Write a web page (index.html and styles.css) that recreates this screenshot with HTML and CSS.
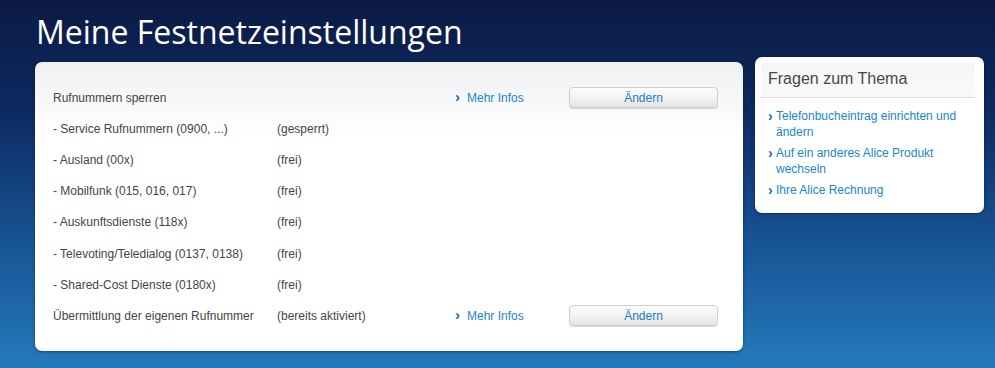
FILE: index.html
```html
<!DOCTYPE html>
<html lang="de">
<head>
  <meta charset="UTF-8">
  <title>Meine Festnetzeinstellungen</title>
  <link rel="stylesheet" href="styles.css">
</head>
<body>
  <h1>Meine Festnetzeinstellungen</h1>
  <div class="layout">
    <div class="main-box">
      <div class="row">
        <span class="label">Rufnummern sperren</span>
        <span class="value"></span>
        <a class="more" href="#"><span class="chev">&rsaquo;</span>Mehr Infos</a>
        <button class="btn">Ändern</button>
      </div>
      <div class="row">
        <span class="label">- Service Rufnummern (0900, ...)</span>
        <span class="value">(gesperrt)</span>
      </div>
      <div class="row">
        <span class="label">- Ausland (00x)</span>
        <span class="value">(frei)</span>
      </div>
      <div class="row">
        <span class="label">- Mobilfunk (015, 016, 017)</span>
        <span class="value">(frei)</span>
      </div>
      <div class="row">
        <span class="label">- Auskunftsdienste (118x)</span>
        <span class="value">(frei)</span>
      </div>
      <div class="row">
        <span class="label">- Televoting/Teledialog (0137, 0138)</span>
        <span class="value">(frei)</span>
      </div>
      <div class="row">
        <span class="label">- Shared-Cost Dienste (0180x)</span>
        <span class="value">(frei)</span>
      </div>
      <div class="row">
        <span class="label">Übermittlung der eigenen Rufnummer</span>
        <span class="value">(bereits aktiviert)</span>
        <a class="more" href="#"><span class="chev">&rsaquo;</span>Mehr Infos</a>
        <button class="btn">Ändern</button>
      </div>
    </div>

    <div class="side-box">
      <h2>Fragen zum Thema</h2>
      <ul class="links">
        <li><a href="#">Telefonbucheintrag einrichten und ändern</a></li>
        <li><a href="#">Auf ein anderes Alice Produkt wechseln</a></li>
        <li><a href="#">Ihre Alice Rechnung</a></li>
      </ul>
    </div>
  </div>
</body>
</html>
```

FILE: styles.css
```css
* { box-sizing: border-box; }
html, body { height: 100%; }
body {
  margin: 0;
  padding: 13px 0 0 36px;
  font-family: "Liberation Sans", Arial, sans-serif;
  font-size: 12px;
  color: #454545;
  background: linear-gradient(to bottom, #0b1a44 0%, #0d2a60 30%, #174f90 62%, #257abb 100%);
  overflow: hidden;
}
h1 {
  margin: 0 0 6px;
  font-family: "Open Sans", sans-serif;
  font-weight: 500;
  font-size: 32px;
  line-height: 38px;
  color: #fff;
  letter-spacing: 0;
}
.layout {
  display: flex;
  align-items: flex-start;
  gap: 12px;
  margin-left: -1px;
}
.main-box {
  width: 708px;
  padding: 20px 18px 19px;
  margin-top: 5px;
  border-radius: 7px;
  background: linear-gradient(to bottom, #eff0f2 0, #fff 75px);
  box-shadow: 0 1px 3px rgba(0,0,0,0.45);
}
.row {
  display: flex;
  align-items: center;
  height: 31.2px;
}
.label { width: 224px; flex: none; }
.value { width: 178px; flex: none; }
.more {
  width: 114px;
  flex: none;
  color: #1a86c9;
  text-decoration: none;
}
.chev {
  display: inline-block;
  width: 12px;
  font-weight: bold;
  font-size: 15px;
  line-height: 12px;
  color: #0f6fb0;
}
.btn {
  width: 149px;
  height: 21px;
  padding: 0;
  border: 1px solid #cfcfcf;
  border-radius: 4px;
  background: linear-gradient(to bottom, #fdfdfd 0%, #f3f3f3 50%, #e4e4e4 100%);
  box-shadow: 0 1px 1px rgba(0,0,0,0.15);
  font-family: "Liberation Sans", Arial, sans-serif;
  font-size: 12px;
  color: #1a7cc0;
  cursor: pointer;
}
.side-box {
  width: 229px;
  padding: 6px 9px 10px 6px;
  border-radius: 7px;
  background: #fff;
  box-shadow: 0 1px 3px rgba(0,0,0,0.45);
}
.side-box h2 {
  margin: 0;
  padding: 4px 7px 6px;
  font-weight: 400;
  font-size: 16px;
  line-height: 24px;
  color: #474747;
  background: linear-gradient(to bottom, #f4f5f6, #fafafa);
  border-bottom: 1px solid #dcdcdc;
}
.links {
  list-style: none;
  margin: 10px 0 0;
  padding: 0 0 0 7px;
}
.links li {
  position: relative;
  padding-left: 8px;
  margin-bottom: 5px;
  line-height: 16px;
}
.links li::before {
  content: "\203A";
  position: absolute;
  left: 0;
  top: 0;
  font-weight: bold;
  font-size: 14px;
  color: #0f6fb0;
}
.links a {
  color: #1a86c9;
  text-decoration: none;
}
```
